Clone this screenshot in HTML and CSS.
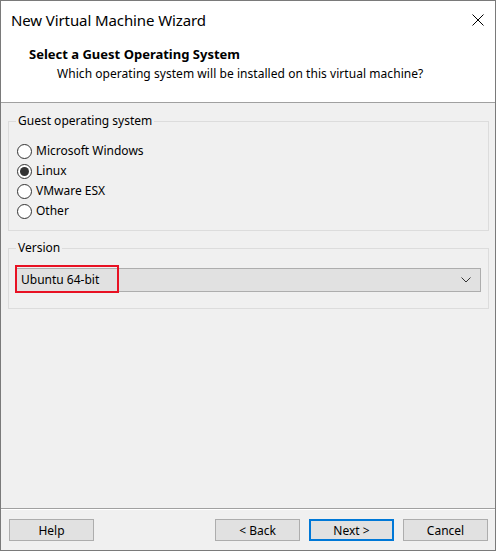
FILE: index.html
```html
<!DOCTYPE html>
<html>
<head>
<meta charset="utf-8">
<link rel="stylesheet" href="styles.css">
</head>
<body>
<div class="window">
  <div class="titlebar">
    <span class="title">New Virtual Machine Wizard</span>
    <svg class="close" width="12" height="12" viewBox="0 0 12 12"><path d="M0.5 0.5 L11.5 11.5 M11.5 0.5 L0.5 11.5" stroke="#000" stroke-width="1" fill="none"/></svg>
  </div>
  <div class="header">
    <div class="heading">Select a Guest Operating System</div>
    <div class="subheading">Which operating system will be installed on this virtual machine?</div>
  </div>
  <div class="content">
    <div class="group group-os">
      <span class="group-caption">Guest operating system</span>
      <div class="radio-row"><span class="radio"></span><span class="label">Microsoft Windows</span></div>
      <div class="radio-row"><span class="radio checked"></span><span class="label">Linux</span></div>
      <div class="radio-row"><span class="radio"></span><span class="label">VMware ESX</span></div>
      <div class="radio-row"><span class="radio"></span><span class="label">Other</span></div>
    </div>
    <div class="group group-version">
      <span class="group-caption">Version</span>
      <div class="combo">
        <span class="combo-text">Ubuntu 64-bit</span>
        <svg class="chevron" width="10" height="6" viewBox="0 0 10 6"><path d="M0.5 0.5 L5 5 L9.5 0.5" stroke="#333" stroke-width="1" fill="none"/></svg>
        <span class="highlight"></span>
      </div>
    </div>
  </div>
  <div class="footer">
    <button class="btn">Help</button>
    <div class="spacer"></div>
    <button class="btn">&lt; Back</button>
    <button class="btn default">Next &gt;</button>
    <button class="btn">Cancel</button>
  </div>
</div>
</body>
</html>
```
FILE: styles.css
```css
* { box-sizing: border-box; }
html, body { margin: 0; padding: 0; }
body {
  width: 496px;
  height: 551px;
  font-family: "Noto Sans", "Open Sans", sans-serif;
  font-size: 12px;
  color: #000;
}
.window {
  width: 496px;
  height: 551px;
  border: 1px solid #7a7a7a;
  background: #f0f0f0;
  display: flex;
  flex-direction: column;
}
.titlebar {
  height: 37px;
  background: #fff;
  display: flex;
  align-items: center;
  padding: 0 11px 0 10px;
}
.title {
  font-size: 15px;
  flex: 1;
  line-height: 20px;
  letter-spacing: -0.1px;
}
.close { display: block; }
.header {
  background: #fff;
  height: 65px;
  border-bottom: 1px solid #a0a0a0;
  padding-top: 6px;
}
.heading {
  font-weight: bold;
  font-size: 13px;
  line-height: 20px;
  padding-left: 28px;
}
.subheading {
  line-height: 20px;
  padding-left: 56px;
  letter-spacing: 0.05px;
}
.content {
  flex: 1;
  padding: 18px 6px 0 7px;
}
.group {
  position: relative;
  border: 1px solid #dcdcdc;
}
.group-caption {
  position: absolute;
  top: -9px;
  left: 7px;
  padding: 0 2px;
  line-height: 16px;
  background: #f0f0f0;
}
.group-os {
  height: 110px;
  padding: 19px 8px 0 8px;
}
.group-version {
  margin-top: 17px;
  height: 61px;
  padding: 19px 7px 0 6px;
}
.radio-row {
  display: flex;
  align-items: center;
  height: 20px;
}
.radio {
  width: 15px;
  height: 15px;
  border-radius: 50%;
  border: 1px solid #333;
  background: #fff;
  margin-right: 4px;
  display: flex;
  align-items: center;
  justify-content: center;
}
.radio.checked::after {
  content: "";
  width: 9px;
  height: 9px;
  border-radius: 50%;
  background: #333;
}
.label { line-height: 16px; }
.combo {
  position: relative;
  height: 24px;
  background: #e1e1e1;
  border: 1px solid #adadad;
  display: flex;
  align-items: center;
  padding: 0 5px 0 5px;
}
.combo-text { flex: 1; line-height: 16px; }
.chevron { display: block; margin-right: 4px; }
.highlight {
  position: absolute;
  left: -1px;
  top: -4px;
  width: 104px;
  height: 28px;
  border: 2px solid #e81123;
}
.footer {
  height: 42px;
  border-top: 1px solid #a0a0a0;
  box-shadow: inset 0 1px 0 #fff;
  display: flex;
  align-items: flex-start;
  padding: 10px 7px 0 8px;
  gap: 9px;
}
.spacer { flex: 1; }
.btn {
  width: 85px;
  height: 22px;
  background: #e1e1e1;
  border: 1px solid #adadad;
  font-family: inherit;
  font-size: 12px;
  color: #000;
  padding: 0;
  margin: 0;
}
.btn.default { border: 2px solid #0078d7; }
```
